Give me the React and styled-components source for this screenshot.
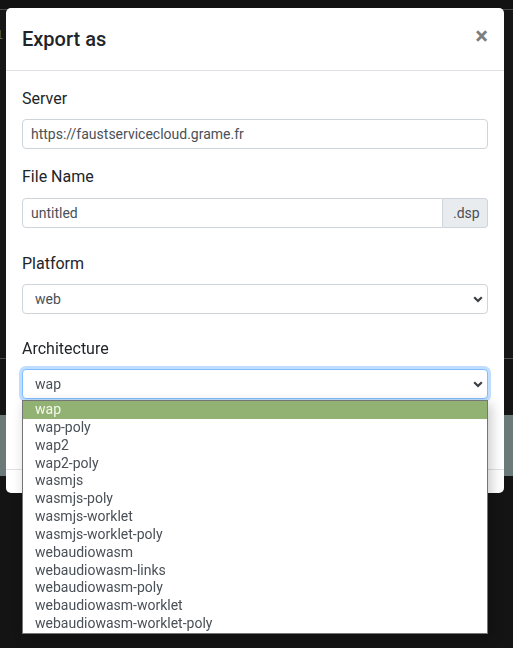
import React from "react";
import styled, { createGlobalStyle } from "styled-components";

const Global = createGlobalStyle`
  html, body { margin: 0; padding: 0; background: #141414; }
  body { font-family: Roboto, "Liberation Sans", Arial, sans-serif; overflow: hidden; }
  * { box-sizing: border-box; }
`;

/* ---------- dimmed editor behind the dialog ---------- */
const Workspace = styled.div`
  display: flex;
  flex-direction: column;
  width: 513px;
  height: 648px;
  background: #141414;
`;

const Strip = styled.div`
  height: ${(p) => p.$h}px;
  flex: none;
  background: ${(p) => p.$bg};
  border-bottom: ${(p) => (p.$line ? `1px solid ${p.$line}` : "none")};
`;

const Gutter = styled.div`
  display: flex;
  align-items: flex-start;
  padding-top: 18px;
  margin-left: -4px;
  font-family: "DejaVu Sans Mono", monospace;
  font-size: 12px;
  color: #4f6b55;
`;

/* ---------- modal ---------- */
const Overlay = styled.div`
  position: fixed;
  inset: 0;
  padding: 8px 0 0 6px;
`;

const Dialog = styled.div`
  width: 498px;
  background: #fff;
  border-radius: 5px;
  display: flex;
  flex-direction: column;
  color: #212529;
`;

const Header = styled.div`
  display: flex;
  align-items: center;
  justify-content: space-between;
  height: 63px;
  padding: 0 16px;
  border-bottom: 1px solid #dee2e6;
`;

const Title = styled.h5`
  margin: 0;
  font-size: 20px;
  font-weight: 500;
  line-height: 30px;
`;

const Close = styled.button`
  border: 0;
  background: transparent;
  padding: 0;
  margin-top: -6px;
  font-family: Roboto, sans-serif;
  font-size: 24px;
  font-weight: 700;
  line-height: 1;
  color: #000;
  opacity: 0.5;
  text-shadow: 0 1px 0 #fff;
  cursor: pointer;
`;

const Body = styled.div`
  padding: 16px;
  height: 398px;
`;

const Group = styled.div`
  margin-bottom: ${(p) => p.$mb}px;
`;

const Label = styled.label`
  display: block;
  font-size: 16px;
  line-height: 24px;
  margin-bottom: ${(p) => p.$mb ?? 8}px;
`;

const fieldBase = `
  height: 30px;
  border: 1px solid #ced4da;
  background: #fff;
  font-size: 14px;
  color: #495057;
  font-family: Roboto, "Liberation Sans", sans-serif;
  display: flex;
  align-items: center;
`;

const TextField = styled.div`
  ${fieldBase}
  width: 100%;
  padding: 0 8px;
  border-radius: ${(p) => (p.$joined ? "4px 0 0 4px" : "4px")};
  flex: 1;
`;

const InputGroup = styled.div`
  display: flex;
`;

const Addon = styled.div`
  ${fieldBase}
  width: 45px;
  flex: none;
  background: #e9ecef;
  border-left: 0;
  border-radius: 0 4px 4px 0;
  padding: 0 0 0 10px;
  color: #495057;
`;

const SelectWrap = styled.div`
  position: relative;
`;

const Select = styled.div`
  ${fieldBase}
  width: 100%;
  padding: 0 4px 0 12px;
  border-radius: 4px;
  justify-content: space-between;
  ${(p) =>
    p.$focus &&
    `border-color: #80bdff; box-shadow: 0 0 0 3px rgba(0,123,255,.25);`}
`;

const Chevron = () => (
  <svg width="10" height="7" viewBox="0 0 10 7">
    <path d="M1.2 1.2l3.8 3.8 3.8-3.8" fill="none" stroke="#3a3f45" strokeWidth="2.2" />
  </svg>
);

const Options = styled.ul`
  position: absolute;
  left: 0;
  right: 0;
  top: calc(100% + 1px);
  margin: 0;
  padding: 0;
  list-style: none;
  background: #fff;
  border: 1px solid #767676;
  box-shadow: 3px 4px 12px rgba(0, 0, 0, 0.22);
  z-index: 5;
`;

const Option = styled.li`
  height: 17.85px;
  line-height: 17.85px;
  padding-left: 12px;
  font-size: 14px;
  color: ${(p) => (p.$active ? "#f6f8ee" : "#495057")};
  background: ${(p) => (p.$active ? "#91b272" : "transparent")};
  white-space: nowrap;
`;

const Footer = styled.div`
  height: 24px;
  border-top: 1px solid #dee2e6;
`;

const architectures = [
  "wap",
  "wap-poly",
  "wap2",
  "wap2-poly",
  "wasmjs",
  "wasmjs-poly",
  "wasmjs-worklet",
  "wasmjs-worklet-poly",
  "webaudiowasm",
  "webaudiowasm-links",
  "webaudiowasm-poly",
  "webaudiowasm-worklet",
  "webaudiowasm-worklet-poly",
];

export default function App() {
  return (
    <>
      <Global />
      <Workspace>
        <Strip $h={10} $bg="#121212" $line="#4a4a4a" />
        <Strip $h={349} $bg="#161616" $line="#4b4b4b">
          <Gutter>1</Gutter>
        </Strip>
        <Strip $h={56} $bg="#141414" />
        <Strip $h={61} $bg="#6b7979" />
        <Strip $h={171} $bg="#141414" />
      </Workspace>
      <Overlay>
        <Dialog>
          <Header>
            <Title>Export as</Title>
            <Close aria-label="Close">×</Close>
          </Header>
          <Body>
            <Group $mb={16}>
              <Label>Server</Label>
              <TextField>https://faustservicecloud.grame.fr</TextField>
            </Group>
            <Group $mb={24}>
              <Label $mb={9}>File Name</Label>
              <InputGroup>
                <TextField $joined>untitled</TextField>
                <Addon>.dsp</Addon>
              </InputGroup>
            </Group>
            <Group $mb={23}>
              <Label>Platform</Label>
              <Select>
                <span>web</span>
                <Chevron />
              </Select>
            </Group>
            <Group $mb={0}>
              <Label>Architecture</Label>
              <SelectWrap>
                <Select $focus>
                  <span>wap</span>
                  <Chevron />
                </Select>
                <Options>
                  {architectures.map((a, i) => (
                    <Option key={a} $active={i === 0}>
                      {a}
                    </Option>
                  ))}
                </Options>
              </SelectWrap>
            </Group>
          </Body>
          <Footer />
        </Dialog>
      </Overlay>
    </>
  );
}
